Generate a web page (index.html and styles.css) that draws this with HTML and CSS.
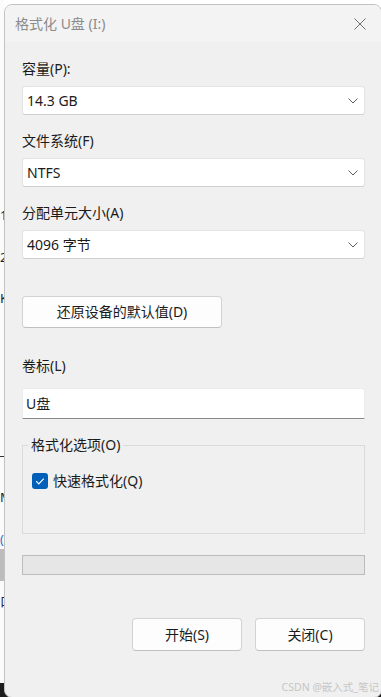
FILE: index.html
```html
<!DOCTYPE html>
<html lang="zh-CN">
<head>
<meta charset="utf-8">
<title>格式化 U盘 (I:)</title>
<link rel="stylesheet" href="styles.css">
</head>
<body>
<div class="screen">
  <div class="strip">
    <div class="frag f1">1</div>
    <div class="frag f2">20</div>
    <div class="frag f3">K</div>
    <div class="frag f4 dash"></div>
    <div class="frag f5">M</div>
    <div class="frag f6 blue">(</div>
    <div class="greyblock"></div>
    <div class="frag f7">口</div>
    <div class="darkblock"></div>
  </div>
  <div class="dialog">
    <div class="titlebar">
      <span class="title">格式化 U盘 (I:)</span>
      <svg class="close" width="12" height="12" viewBox="0 0 12 12"><path d="M0.5 0.5 L11.5 11.5 M11.5 0.5 L0.5 11.5" stroke="#6f6f6f" stroke-width="1" fill="none"/></svg>
    </div>
    <div class="body">
      <div class="label">容量(P):</div>
      <div class="select"><span>14.3 GB</span><svg class="chev" width="10" height="6" viewBox="0 0 10 6"><path d="M0.5 0.5 L5 5 L9.5 0.5" stroke="#5c5c5c" stroke-width="1" fill="none"/></svg></div>

      <div class="label gap">文件系统(F)</div>
      <div class="select"><span>NTFS</span><svg class="chev" width="10" height="6" viewBox="0 0 10 6"><path d="M0.5 0.5 L5 5 L9.5 0.5" stroke="#5c5c5c" stroke-width="1" fill="none"/></svg></div>

      <div class="label gap">分配单元大小(A)</div>
      <div class="select"><span>4096 字节</span><svg class="chev" width="10" height="6" viewBox="0 0 10 6"><path d="M0.5 0.5 L5 5 L9.5 0.5" stroke="#5c5c5c" stroke-width="1" fill="none"/></svg></div>

      <button class="btn restore">还原设备的默认值(D)</button>

      <div class="label vol">卷标(L)</div>
      <div class="input">U盘</div>

      <fieldset class="group">
        <legend>格式化选项(O)</legend>
        <div class="check-row">
          <span class="checkbox"><svg width="16" height="16" viewBox="0 0 16 16"><path d="M4.2 8.2 L6.8 10.8 L11.8 5.6" stroke="#fff" stroke-width="1.2" fill="none"/></svg></span>
          <span>快速格式化(Q)</span>
        </div>
      </fieldset>

      <div class="progress"></div>

      <div class="actions">
        <button class="btn act">开始(S)</button>
        <button class="btn act">关闭(C)</button>
      </div>
    </div>
    <div class="watermark">CSDN @嵌入式_笔记</div>
  </div>
</div>
</body>
</html>
```

FILE: styles.css
```css
* { box-sizing: border-box; }
html, body { margin: 0; padding: 0; }
body {
  background: #ffffff;
  font-family: "Noto Sans", "Noto Sans CJK SC", sans-serif;
  font-size: 14px;
  color: #1b1b1b;
}
.screen {
  width: 381px;
  height: 697px;
  overflow: hidden;
  display: flex;
  padding-top: 4px;
  background: linear-gradient(to bottom, #ffffff 683px, #1d1d1d 683px);
}
.strip {
  width: 4px;
  flex: none;
  overflow: hidden;
  display: flex;
  flex-direction: column;
  margin-top: -4px;
  background: #fbfbfb;
}
.frag {
  font-size: 13px;
  line-height: 20px;
  height: 20px;
  color: #222;
  white-space: nowrap;
}
.f1 { margin-top: 205px; }
.f2 { margin-top: 22px; }
.f3 { margin-top: 21px; }
.dash { margin-top: 148px; height: 1px; width: 4px; background: #333; }
.f5 { margin-top: 30px; }
.f6 { margin-top: 22px; color: #2a6fd0; }
.greyblock { margin-top: 0; height: 32px; background: #bcbcbc; flex: none; }
.f7 { margin-top: 10px; }
.darkblock { margin-top: auto; height: 14px; background: #1d1d1d; flex: none; }

.dialog {
  position: relative;
  width: 378px;
  height: 694px;
  flex: none;
  background: #f0f0f0;
  border: 1px solid #c2c2c2;
  border-radius: 8px;
  overflow: hidden;
}
.titlebar {
  height: 37px;
  background: #f3f3f3;
  display: flex;
  align-items: center;
  justify-content: space-between;
  padding-left: 10px;
  padding-right: 15px;
}
.title {
  color: #8b8b8b;
  font-size: 14px;
  line-height: 20px;
}
.close { display: block; }
.body {
  padding: 17px 16px 0 17px;
  width: 376px;
  display: flex;
  flex-direction: column;
}
.label {
  line-height: 20px;
  height: 20px;
  white-space: nowrap;
}
.label.gap { margin-top: 16px; }
.select {
  margin-top: 7px;
  height: 29px;
  background: #ffffff;
  border: 1px solid #e3e3e3;
  border-bottom-color: #cfcfcf;
  border-radius: 3px;
  display: flex;
  align-items: center;
  justify-content: space-between;
  padding: 0 6px 0 4px;
  line-height: 20px;
}
.chev { display: block; }
.btn {
  font-family: inherit;
  font-size: 14px;
  color: #1b1b1b;
  background: #fdfdfd;
  border: 1px solid #d3d3d3;
  border-bottom-color: #c0c0c0;
  border-radius: 4px;
  padding: 0;
  line-height: 20px;
}
.restore {
  margin-top: 37px;
  width: 200px;
  height: 32px;
}
.label.vol { margin-top: 28px; }
.input {
  margin-top: 12px;
  height: 31px;
  background: #ffffff;
  border: 1px solid #ececec;
  border-bottom: 1px solid #8a8a8a;
  border-radius: 3px 3px 0 0;
  padding: 0 4px 0 3px;
  display: flex;
  align-items: center;
  line-height: 20px;
}
.group {
  margin: 16px 0 0 0;
  border: 1px solid #dadada;
  padding: 16px 5px 42px 5px;
  min-width: 0;
}
.group legend {
  padding: 0 3px 0 3px;
  margin-left: 0;
  line-height: 20px;
  font-size: 14px;
  color: #1b1b1b;
}
.check-row {
  display: flex;
  align-items: center;
  gap: 5px;
  height: 20px;
  line-height: 20px;
  padding-left: 4px;
}
.checkbox {
  width: 16px;
  height: 16px;
  border-radius: 3px;
  background: #005fb8;
  display: flex;
}
.progress {
  margin-top: 21px;
  height: 20px;
  background: #e6e6e6;
  border: 1px solid #bcbcbc;
}
.actions {
  margin-top: 43px;
  display: flex;
  justify-content: flex-end;
  gap: 13px;
}
.act {
  width: 110px;
  height: 33px;
}
.watermark {
  position: absolute;
  right: 2px;
  bottom: 3px;
  font-size: 10.5px;
  line-height: 14px;
  color: #c6c6c6;
  white-space: nowrap;
}
```
